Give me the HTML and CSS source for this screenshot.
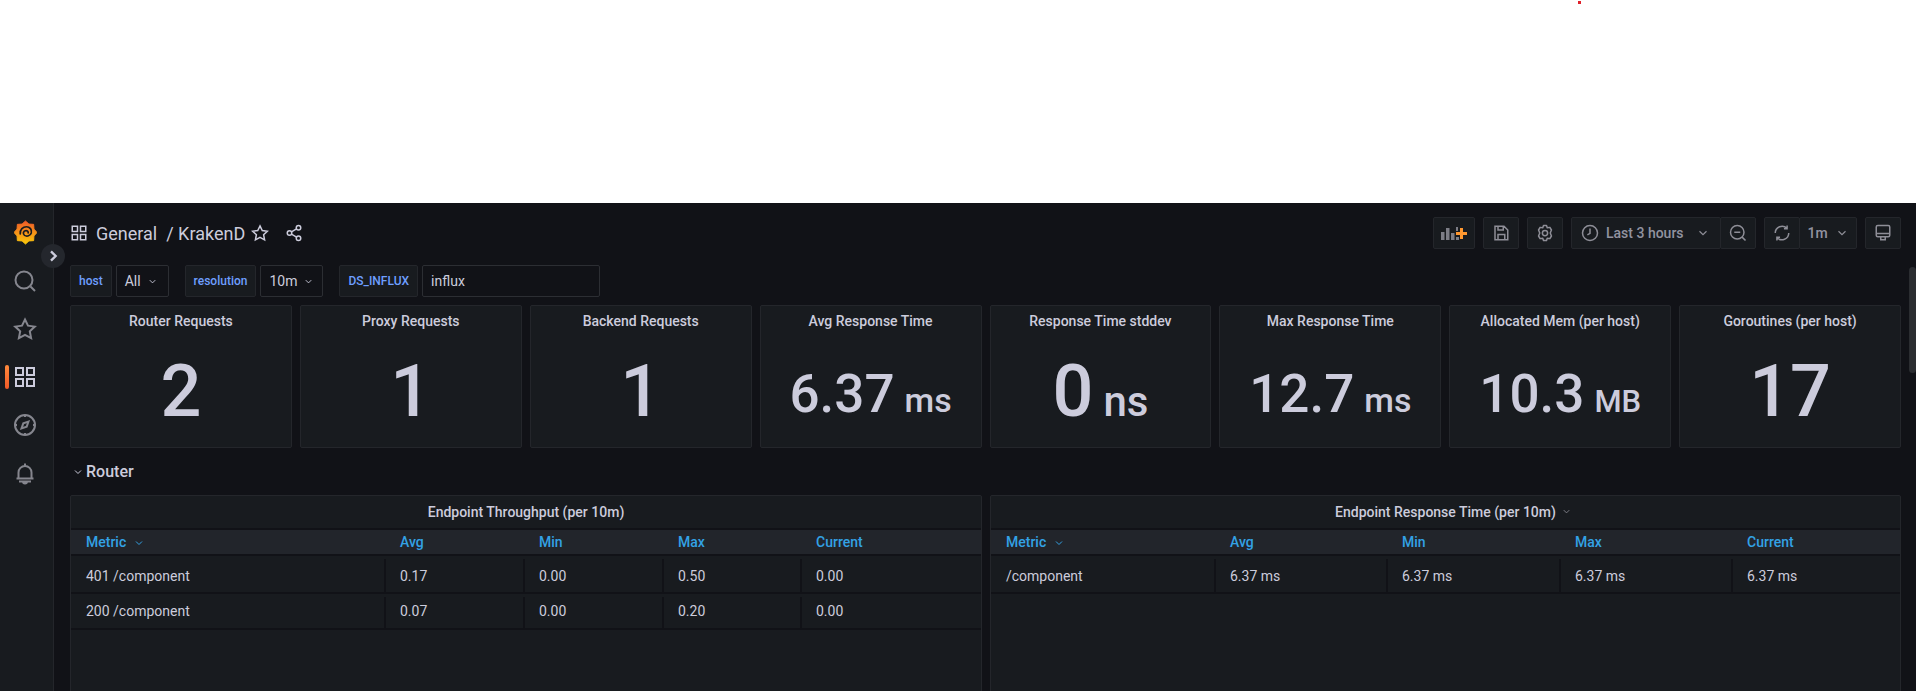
FILE: index.html
```html
<!DOCTYPE html>
<html lang="en">

<head>
    <meta charset="UTF-8">
    <meta name="viewport" content="width=device-width, initial-scale=1.0">
    <title>KrakenD - Grafana</title>
    <link rel="stylesheet" href="styles.css">
</head>

<body>
    <!-- Blank strip above the dashboard -->
    <div class="blank-strip"><span class="red-dot"></span></div>

    <div class="app">
        <!-- Side menu -->
        <nav class="sidemenu">
            <a class="side-item side-logo">
                <svg class="logo" viewBox="0 0 24 26">
                    <defs>
                        <linearGradient id="logoGrad" x1="0" y1="1" x2="0" y2="0">
                            <stop offset="0" stop-color="#fbca0a" />
                            <stop offset="1" stop-color="#f05a28" />
                        </linearGradient>
                    </defs>
                    <polygon fill="url(#logoGrad)" stroke="url(#logoGrad)" stroke-width="1" stroke-linejoin="round"
                        points="12,1 15.6,4.2 20.5,4.5 20.8,9.4 24,13 20.8,16.6 20.5,21.5 15.6,21.8 12,25 8.4,21.8 3.5,21.5 3.2,16.6 0,13 3.2,9.4 3.5,4.5 8.4,4.2" />
                    <path fill="none" stroke="#181b1f" stroke-width="1.8" stroke-linecap="round"
                        d="M6.5 14.5C6 9.5 9.5 7 13 7c3.500 0 6 3 5 6.500-1 3-4.500 4-7 2.500-2-1.500-1.500-5 1.500-5 1.500 0 2.500 1 2.300 2.500" />
                </svg>
            </a>
            <a class="side-item">
                <svg class="side-icon" viewBox="0 0 24 24">
                    <circle cx="11" cy="11" r="8.5" />
                    <path d="M17.5 17.5 22 22" />
                </svg>
            </a>
            <a class="side-item">
                <svg class="side-icon" viewBox="0 0 24 24">
                    <path d="M12 2.5l3 6.200 6.800.9-5 4.700 1.300 6.800-6.100-3.300-6.100 3.300 1.300-6.800-5-4.700 6.800-.9z" />
                </svg>
            </a>
            <a class="side-item active">
                <svg class="side-icon" viewBox="0 0 24 24">
                    <path d="M3 3h7v7H3zM14 3h7v7h-7zM3 14h7v7H3zM14 14h7v7h-7z" />
                </svg>
            </a>
            <a class="side-item">
                <svg class="side-icon" viewBox="0 0 24 24">
                    <circle cx="12" cy="12" r="10" />
                    <path d="M15.5 8.5l-1.800 5.200-5.200 1.800 1.800-5.200zM12 2v2M12 20v2M2 12h2M20 12h2" />
                </svg>
            </a>
            <a class="side-item">
                <svg class="side-icon" viewBox="0 0 24 24">
                    <path d="M12 2.5v2M5.5 17v-5.500a6.500 6.500 0 0 1 13 0V17M3.5 17.5h17M6 20.5h12M10 20.5a2 2 0 0 0 4 0" />
                </svg>
            </a>
        </nav>
        <button class="side-toggle">
            <svg viewBox="0 0 24 24"><path d="M9 5l7 7-7 7" /></svg>
        </button>

        <main class="main">
            <!-- Toolbar -->
            <header class="toolbar">
                <div class="breadcrumb">
                    <svg class="crumb-icon" viewBox="0 0 24 24">
                        <path d="M3 3h7v7H3zM14 3h7v7h-7zM3 14h7v7H3zM14 14h7v7h-7z" />
                    </svg>
                    <span class="crumb-folder">General</span>
                    <span class="crumb-name">/ KrakenD</span>
                    <svg class="crumb-star" viewBox="0 0 24 24">
                        <path d="M12 2.5l3 6.200 6.800.9-5 4.700 1.300 6.800-6.100-3.300-6.100 3.300 1.300-6.800-5-4.700 6.800-.9z" />
                    </svg>
                    <svg class="crumb-share" viewBox="0 0 24 24">
                        <circle cx="18" cy="5" r="3" />
                        <circle cx="6" cy="12" r="3" />
                        <circle cx="18" cy="19" r="3" />
                        <path d="M8.6 10.5l6.800-4M8.6 13.5l6.800 4" />
                    </svg>
                </div>

                <div class="toolbar-actions">
                    <div class="btn btn-add">
                        <svg viewBox="0 0 26 14">
                            <path class="bars" d="M0 6h3.500v8H0zM5 2h3.500v12H5zM10 7h3.500v7H10zM15 1h2v4h-2zM15 11h3v3h-3z" />
                            <path class="plus" d="M19 2h3v4h4v3h-4v4h-3V9h-4V6h4z" />
                        </svg>
                    </div>
                    <div class="btn btn-icon">
                        <svg viewBox="0 0 24 24">
                            <path d="M4 3h12l5 5v13H4zM8 21v-7h9v7M8 3v5h7V3" />
                        </svg>
                    </div>
                    <div class="btn btn-icon">
                        <svg viewBox="0 0 24 24">
                            <circle cx="12" cy="12" r="3.5" />
                            <path stroke-linejoin="round" d="M10 2h4l1 3 3.500-.5 2.100 3.500L19 12l1.600 4-2.100 3.500L15 19l-1 3h-4l-1-3-3.500.5L3.400 16 5 12 3.400 8l2.100-3.500L9 5z" />
                        </svg>
                    </div>
                    <div class="btn-group">
                        <div class="btn btn-time">
                            <svg viewBox="0 0 24 24">
                                <circle cx="12" cy="12" r="10" />
                                <path d="M12 6v6.500l-3.500 2" />
                            </svg>
                            <span class="time-label">Last 3 hours</span>
                            <svg class="caret" viewBox="0 0 24 24"><path d="M6 9l6 6 6-6" /></svg>
                        </div>
                        <div class="btn btn-icon">
                            <svg viewBox="0 0 24 24">
                                <circle cx="11" cy="11" r="9" />
                                <path d="M7 11h8M17.5 17.5 22 22" />
                            </svg>
                        </div>
                    </div>
                    <div class="btn-group">
                        <div class="btn btn-icon">
                            <svg viewBox="0 0 24 24">
                                <path d="M3 12a9 9 0 0 1 15.500-6.200M21 12a9 9 0 0 1-15.500 6.200M18.800 2v4.200h-4.200M5.200 22v-4.200h4.200" />
                            </svg>
                        </div>
                        <div class="btn btn-refresh">
                            <span class="time-label">1m</span>
                            <svg class="caret" viewBox="0 0 24 24"><path d="M6 9l6 6 6-6" /></svg>
                        </div>
                    </div>
                    <div class="btn btn-icon">
                        <svg viewBox="0 0 24 24">
                            <path d="M5 2h14a2 2 0 0 1 2 2v11a2 2 0 0 1-2 2H5a2 2 0 0 1-2-2V4a2 2 0 0 1 2-2zM3 12.5h18M9 17v4h6v-4" />
                        </svg>
                    </div>
                </div>
            </header>

            <!-- Template variables -->
            <section class="variables">
                <div class="variable">
                    <label class="var-label">host</label>
                    <div class="var-value var-host">All
                        <svg class="caret" viewBox="0 0 24 24"><path d="M6 9l6 6 6-6" /></svg>
                    </div>
                </div>
                <div class="variable">
                    <label class="var-label">resolution</label>
                    <div class="var-value var-res">10m
                        <svg class="caret" viewBox="0 0 24 24"><path d="M6 9l6 6 6-6" /></svg>
                    </div>
                </div>
                <div class="variable">
                    <label class="var-label">DS_INFLUX</label>
                    <div class="var-value var-text">influx</div>
                </div>
            </section>

            <!-- Stat panels -->
            <section class="stats">
                <div class="panel stat">
                    <div class="stat-title">Router Requests</div>
                    <div class="stat-value big">2</div>
                </div>
                <div class="panel stat">
                    <div class="stat-title">Proxy Requests</div>
                    <div class="stat-value big">1</div>
                </div>
                <div class="panel stat">
                    <div class="stat-title">Backend Requests</div>
                    <div class="stat-value big">1</div>
                </div>
                <div class="panel stat">
                    <div class="stat-title">Avg Response Time</div>
                    <div class="stat-value">6.37<span class="unit">ms</span></div>
                </div>
                <div class="panel stat">
                    <div class="stat-title">Response Time stddev</div>
                    <div class="stat-value big">0<span class="unit">ns</span></div>
                </div>
                <div class="panel stat">
                    <div class="stat-title">Max Response Time</div>
                    <div class="stat-value">12.7<span class="unit">ms</span></div>
                </div>
                <div class="panel stat">
                    <div class="stat-title">Allocated Mem (per host)</div>
                    <div class="stat-value">10.3<span class="unit unit-caps">MB</span></div>
                </div>
                <div class="panel stat">
                    <div class="stat-title">Goroutines (per host)</div>
                    <div class="stat-value big">17</div>
                </div>
            </section>

            <!-- Router row -->
            <div class="row-title">
                <svg class="caret" viewBox="0 0 24 24"><path d="M6 9l6 6 6-6" /></svg>
                Router
            </div>

            <section class="tables">
                <div class="panel table-panel">
                    <div class="table-title">Endpoint Throughput (per 10m)</div>
                    <table class="metrics metrics-left">
                        <thead>
                            <tr>
                                <th>Metric <svg class="caret" viewBox="0 0 24 24"><path d="M6 9l6 6 6-6" /></svg></th>
                                <th>Avg</th>
                                <th>Min</th>
                                <th>Max</th>
                                <th>Current</th>
                            </tr>
                        </thead>
                        <tbody>
                            <tr>
                                <td>401 /component</td>
                                <td>0.17</td>
                                <td>0.00</td>
                                <td>0.50</td>
                                <td>0.00</td>
                            </tr>
                            <tr>
                                <td>200 /component</td>
                                <td>0.07</td>
                                <td>0.00</td>
                                <td>0.20</td>
                                <td>0.00</td>
                            </tr>
                        </tbody>
                    </table>
                </div>
                <div class="panel table-panel">
                    <div class="table-title">Endpoint Response Time (per 10m)
                        <svg class="caret" viewBox="0 0 24 24"><path d="M6 9l6 6 6-6" /></svg>
                    </div>
                    <table class="metrics metrics-right">
                        <thead>
                            <tr>
                                <th>Metric <svg class="caret" viewBox="0 0 24 24"><path d="M6 9l6 6 6-6" /></svg></th>
                                <th>Avg</th>
                                <th>Min</th>
                                <th>Max</th>
                                <th>Current</th>
                            </tr>
                        </thead>
                        <tbody>
                            <tr>
                                <td>/component</td>
                                <td>6.37 ms</td>
                                <td>6.37 ms</td>
                                <td>6.37 ms</td>
                                <td>6.37 ms</td>
                            </tr>
                        </tbody>
                    </table>
                </div>
            </section>
        </main>

        <div class="scrollbar"></div>
    </div>
</body>

</html>
```

FILE: styles.css
```css
/* Reset default margin and padding */
* {
    margin: 0;
    padding: 0;
    box-sizing: border-box;
}

html,
body {
    height: 100%;
    overflow: hidden;
    background-color: #fff;
}

body {
    font-family: Roboto, "Liberation Sans", sans-serif;
    font-size: 14px;
    color: #ccccdc;
}

svg {
    display: block;
    flex: none;
    fill: none;
    stroke: currentColor;
    stroke-width: 2;
}

/* White strip on top */
.blank-strip {
    position: relative;
    height: 203px;
}

.red-dot {
    position: absolute;
    left: 1578px;
    top: 1px;
    width: 3px;
    height: 3px;
    background-color: #e0202a;
}

.app {
    position: relative;
    display: flex;
    height: 488px;
    overflow: hidden;
    background-color: #111217;
}

/* Side menu */
.sidemenu {
    width: 54px;
    flex: none;
    padding-top: 5px;
    background-color: #181b1f;
    border-right: 1px solid #24262b;
}

.side-item {
    position: relative;
    display: flex;
    align-items: center;
    justify-content: center;
    width: 50px;
    height: 48px;
    color: #85868e;
}

.side-logo {
    height: 49px;
}

.side-item.active {
    color: #ccccdc;
}

.side-item.active::before {
    content: "";
    position: absolute;
    left: 5px;
    top: 12px;
    width: 4px;
    height: 24px;
    border-radius: 2px;
    background: linear-gradient(#ff8a3c, #f05a28);
}

.logo {
    width: 23px;
    height: 25px;
    stroke: none;
}

.side-icon {
    width: 24px;
    height: 24px;
}

.side-toggle {
    position: absolute;
    left: 41px;
    top: 41px;
    display: flex;
    align-items: center;
    justify-content: center;
    width: 24px;
    height: 24px;
    border: none;
    border-radius: 50%;
    background-color: #24272d;
    color: #ccccdc;
}

.side-toggle svg {
    width: 16px;
    height: 16px;
    stroke-width: 3.5;
}

/* Main area */
.main {
    flex: 1;
    min-width: 0;
    padding: 14px 15px 0 16px;
}

.toolbar {
    display: flex;
    align-items: center;
    justify-content: space-between;
    height: 32px;
}

.breadcrumb {
    display: flex;
    align-items: center;
    font-size: 18px;
    color: #ccccdc;
}

.crumb-icon {
    width: 18px;
    height: 18px;
    margin-right: 8px;
}

.crumb-name {
    margin-left: 9px;
}

.crumb-star {
    width: 18px;
    height: 18px;
    margin-left: 6px;
}

.crumb-share {
    width: 18px;
    height: 18px;
    margin-left: 16px;
}

.toolbar-actions {
    display: flex;
    gap: 8px;
}

.btn {
    display: flex;
    align-items: center;
    justify-content: center;
    height: 32px;
    background-color: #181b1f;
    border: 1px solid #24262b;
    border-radius: 2px;
    color: #8e8e97;
}

.btn svg {
    width: 18px;
    height: 18px;
}

.btn-icon {
    width: 36px;
}

.btn-add {
    width: 42px;
}

.btn-add svg {
    width: 26px;
    height: 14px;
    stroke: none;
}

.bars {
    fill: #7c7d86;
}

.plus {
    fill: #ff9830;
}

.btn-group {
    display: flex;
}

.btn-group .btn + .btn {
    margin-left: -1px;
}

.btn-time {
    width: 150px;
    justify-content: flex-start;
    padding-left: 9px;
}

.time-label {
    font-weight: 500;
    color: #9293a0;
}

.btn-time .time-label {
    margin-left: 7px;
}

.btn-time svg.caret {
    margin-left: 12px;
}

.btn-refresh {
    width: 58px;
}

.btn-refresh svg.caret {
    margin-left: 7px;
}

.btn svg.caret {
    width: 14px;
    height: 14px;
}

.caret {
    width: 12px;
    height: 12px;
}

/* Template variables */
.variables {
    display: flex;
    gap: 16px;
    margin-top: 16px;
    height: 32px;
}

.variable {
    display: flex;
    gap: 4px;
}

.var-label {
    display: flex;
    align-items: center;
    padding: 0 8px;
    font-size: 12px;
    font-weight: 500;
    color: #6e9fff;
    background-color: #181b1f;
    border: 1px solid #24262b;
    border-radius: 2px;
}

.var-value {
    display: flex;
    align-items: center;
    padding: 0 8px;
    background-color: #111217;
    border: 1px solid #2c2e33;
    border-radius: 2px;
}

.var-value .caret {
    margin-left: 6px;
    width: 11px;
    height: 11px;
}

.var-host {
    padding-right: 10px;
}

.var-text {
    width: 178px;
}

/* Stat panels */
.panel {
    background-color: #181b1f;
    border: 1px solid #24262b;
    border-radius: 2px;
}

.stats {
    display: grid;
    grid-template-columns: repeat(8, 1fr);
    gap: 8px;
    margin-top: 8px;
    height: 143px;
}

.stat {
    display: flex;
    flex-direction: column;
    align-items: center;
}

.stat-title {
    margin-top: 7px;
    line-height: 16px;
    font-weight: 500;
}

.stat-value {
    display: flex;
    align-items: baseline;
    margin-top: 30px;
    font-size: 53px;
    line-height: 70px;
    font-weight: 500;
    color: #ccccdc;
}

.stat-value.big {
    margin-top: 28px;
    font-size: 72px;
}

.unit {
    margin-left: 10px;
    font-size: 34px;
}

.stat-value.big .unit {
    font-size: 42px;
}

.unit-caps {
    font-size: 31px;
}

/* Router row */
.row-title {
    display: flex;
    align-items: center;
    gap: 2px;
    height: 47px;
    padding-left: 2px;
    font-size: 16px;
    font-weight: 500;
}

/* Table panels */
.tables {
    display: grid;
    grid-template-columns: 912px 1fr;
    gap: 8px;
    height: 300px;
}

.table-title {
    display: flex;
    align-items: center;
    justify-content: center;
    gap: 5px;
    height: 32px;
    padding-bottom: 1px;
    font-weight: 500;
}

/* Caret hangs past the title so the text stays centred */
.table-title .caret {
    color: #85868e;
    width: 11px;
    height: 11px;
    margin-right: -16px;
}

.metrics {
    width: 100%;
    table-layout: fixed;
    border-collapse: collapse;
    border-top: 2px solid #111217;
}

.metrics th {
    height: 26px;
    padding-left: 16px;
    text-align: left;
    font-weight: 500;
    color: #33a2e5;
    background-color: #22252b;
    border-bottom: 2px solid #111217;
}

.metrics th:first-child,
.metrics td:first-child {
    padding-left: 15px;
}

.metrics th .caret {
    display: inline-block;
    width: 12px;
    height: 12px;
    margin-left: 3px;
    vertical-align: -2px;
}

.metrics td {
    height: 36px;
    padding-left: 16px;
    border-bottom: 2px solid #111217;
}

.metrics tbody tr:first-child td {
    height: 38px;
    padding-top: 3px;
}

/* Column dividers stop short of the row above */
.metrics td + td {
    background: linear-gradient(#111217, #111217) 0 3px / 2px 100% no-repeat;
}

.metrics-left th:nth-child(1) { width: 313px; }
.metrics-left th:nth-child(2) { width: 139px; }
.metrics-left th:nth-child(3) { width: 139px; }
.metrics-left th:nth-child(4) { width: 138px; }

.metrics-right th:nth-child(1) { width: 223px; }
.metrics-right th:nth-child(2) { width: 172px; }
.metrics-right th:nth-child(3) { width: 173px; }
.metrics-right th:nth-child(4) { width: 172px; }

/* Overlay scrollbar */
.scrollbar {
    position: absolute;
    right: 0;
    top: 64px;
    width: 7px;
    height: 106px;
    border-radius: 4px;
    background-color: #2b2d31;
}
```
